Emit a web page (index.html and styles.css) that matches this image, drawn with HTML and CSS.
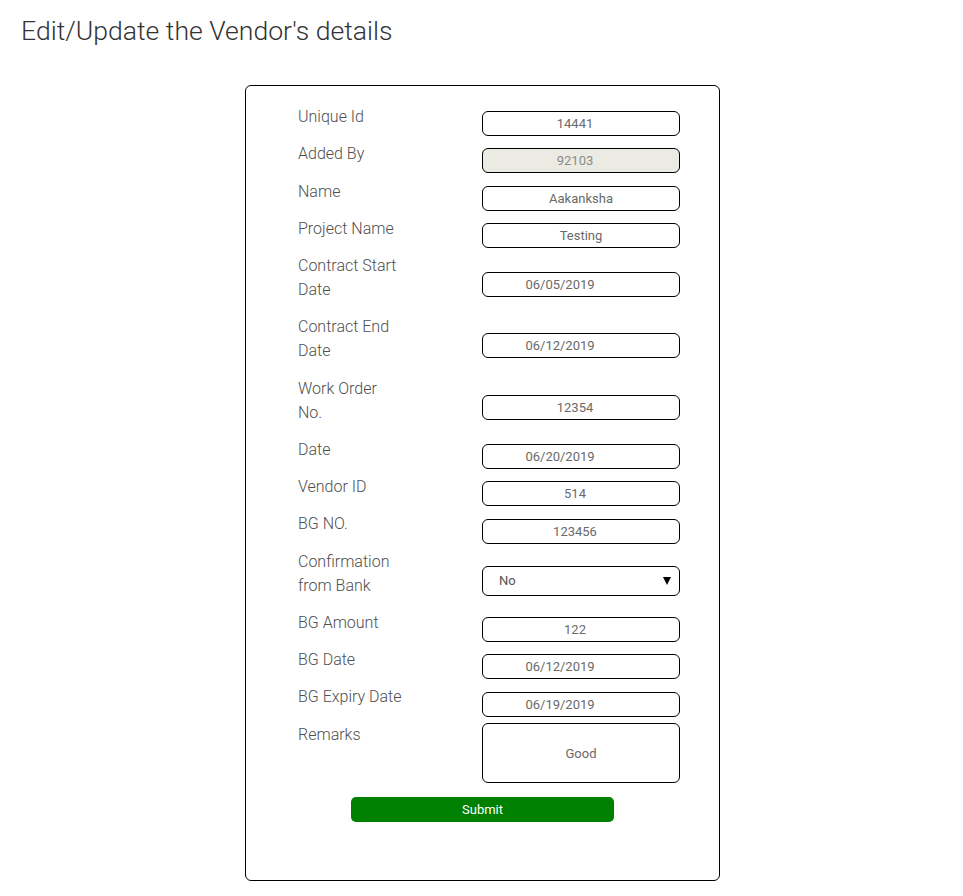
FILE: index.html
```html
<!DOCTYPE html>
<html lang="en">
<head>
<meta charset="utf-8">
<title>Edit/Update the Vendor's details</title>
<link rel="stylesheet" href="styles.css">
</head>
<body>
<h1 class="page-title">Edit/Update the Vendor's details</h1>
<form class="card">
  <div class="row">
    <label class="label">Unique Id</label>
    <input class="field num" type="text" value="14441">
  </div>
  <div class="row">
    <label class="label">Added By</label>
    <input class="field num disabled" type="text" value="92103" disabled>
  </div>
  <div class="row">
    <label class="label">Name</label>
    <input class="field" type="text" value="Aakanksha">
  </div>
  <div class="row">
    <label class="label">Project Name</label>
    <input class="field" type="text" value="Testing">
  </div>
  <div class="row">
    <label class="label">Contract Start<br>Date</label>
    <input class="field date" type="text" value="06/05/2019">
  </div>
  <div class="row">
    <label class="label">Contract End<br>Date</label>
    <input class="field date" type="text" value="06/12/2019">
  </div>
  <div class="row">
    <label class="label">Work Order<br>No.</label>
    <input class="field num" type="text" value="12354">
  </div>
  <div class="row">
    <label class="label">Date</label>
    <input class="field date" type="text" value="06/20/2019">
  </div>
  <div class="row">
    <label class="label">Vendor ID</label>
    <input class="field num" type="text" value="514">
  </div>
  <div class="row">
    <label class="label">BG NO.</label>
    <input class="field num" type="text" value="123456">
  </div>
  <div class="row">
    <label class="label">Confirmation<br>from Bank</label>
    <div class="select-wrap">
      <select class="select">
        <option>No</option>
        <option>Yes</option>
      </select>
    </div>
  </div>
  <div class="row">
    <label class="label">BG Amount</label>
    <input class="field num" type="text" value="122">
  </div>
  <div class="row">
    <label class="label">BG Date</label>
    <input class="field date" type="text" value="06/12/2019">
  </div>
  <div class="row">
    <label class="label">BG Expiry Date</label>
    <input class="field date" type="text" value="06/19/2019">
  </div>
  <div class="row row-top">
    <label class="label">Remarks</label>
    <textarea class="textarea">Good</textarea>
  </div>
  <div class="actions">
    <button class="submit" type="button">Submit</button>
  </div>
</form>
</body>
</html>
```
FILE: styles.css
```css
* {
  box-sizing: border-box;
}

body {
  margin: 0;
  background: #ffffff;
  font-family: Roboto, "Liberation Sans", sans-serif;
  color: #333333;
}

.page-title {
  margin: 16px 0 0 21px;
  font-size: 26.6px;
  font-weight: 300;
  line-height: 30.5px;
  color: #333333;
}

.card {
  width: 475px;
  margin: 38.5px 0 0 245px;
  border: 1px solid #000000;
  border-radius: 6px;
  padding: 19px 0 57.5px 52px;
}

.row {
  display: flex;
  align-items: center;
}

.row-top {
  align-items: flex-start;
}

.label {
  width: 184px;
  flex: none;
  font-size: 16px;
  font-weight: 300;
  line-height: 24px;
  padding-bottom: 13.28px;
  color: #4f4f4f;
}

.field {
  width: 198px;
  height: 25px;
  border: 1px solid #000000;
  border-radius: 6px;
  padding: 0;
  font-family: Roboto, "Liberation Sans", sans-serif;
  font-size: 13px;
  font-weight: 400;
  color: #6a6a6a;
  text-align: center;
  background: #ffffff;
  outline: none;
}

.field.num {
  padding-right: 12px;
}

.field.date {
  padding-right: 42px;
}

.field.disabled {
  background: #ebebe4;
  color: #8a8a8a;
}

.select-wrap {
  position: relative;
  width: 198px;
  height: 30px;
  margin-top: 1px;
}

.select {
  width: 100%;
  height: 100%;
  appearance: none;
  -webkit-appearance: none;
  border: 1px solid #000000;
  border-radius: 6px;
  background: #ffffff;
  padding: 0 0 0 16px;
  font-family: Roboto, "Liberation Sans", sans-serif;
  font-size: 13px;
  color: #555555;
  outline: none;
}

.select-wrap::after {
  content: "";
  position: absolute;
  right: 9px;
  top: 11px;
  border-left: 4px solid transparent;
  border-right: 4px solid transparent;
  border-top: 8px solid #000000;
  pointer-events: none;
}

.textarea {
  display: block;
  width: 198px;
  height: 60px;
  margin-top: 0;
  border: 1px solid #000000;
  border-radius: 6px;
  padding: 22px 0 0 0;
  resize: none;
  font-family: Roboto, "Liberation Sans", sans-serif;
  font-size: 13px;
  line-height: 16px;
  color: #6a6a6a;
  text-align: center;
  outline: none;
  overflow: hidden;
}

.actions {
  display: flex;
  justify-content: center;
  margin: 14.5px 0 0 -52px;
}

.submit {
  width: 263px;
  height: 25px;
  border: none;
  border-radius: 5px;
  background: #008000;
  color: #ffffff;
  font-family: Roboto, "Liberation Sans", sans-serif;
  font-size: 13px;
  font-weight: 400;
  padding: 0;
  cursor: pointer;
}
```
